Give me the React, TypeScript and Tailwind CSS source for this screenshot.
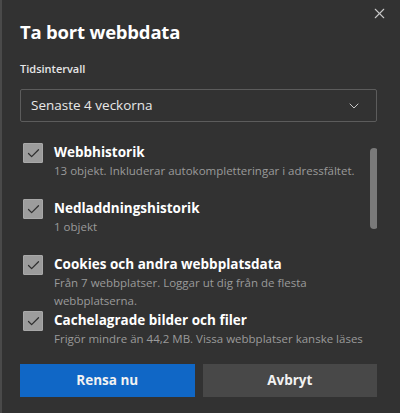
import { X, ChevronDown, Check } from "lucide-react";

const items = [
  { title: "Webbhistorik", desc: "13 objekt. Inkluderar autokompletteringar i adressfältet." },
  { title: "Nedladdningshistorik", desc: "1 objekt" },
  { title: "Cookies och andra webbplatsdata", desc: "Från 7 webbplatser. Loggar ut dig från de flesta webbplatserna." },
  { title: "Cachelagrade bilder och filer", desc: "Frigör mindre än 44,2 MB. Vissa webbplatser kanske läses in långsammare nästa gång du besöker dem." },
];

export default function App() {
  return (
    <div className="w-[400px] h-[413px] bg-[#323232] border-l-2 border-[#4a4a4a] text-white font-['Segoe_UI','Open_Sans',sans-serif] relative overflow-hidden">
      <button className="absolute right-[12px] top-[5px] text-[#c8c8c8]">
        <X size={17} strokeWidth={1.5} />
      </button>

      <div className="pl-[18px] pr-[23px] pt-[19px]">
        {/* Title */}
        <h1 className="text-[18.5px] font-bold leading-[26px] tracking-[-0.2px]">Ta bort webbdata</h1>

        {/* Time range */}
        <div className="mt-[16px] text-[11px] font-semibold leading-[16px] text-[#e6e6e6]">Tidsintervall</div>
        <div className="mt-[12px] h-[33px] border border-[#5c5c5c] rounded-[2px] flex items-center justify-between pl-[10px] pr-[14px]">
          <span className="text-[13.5px] text-[#e8e8e8]">Senaste 4 veckorna</span>
          <ChevronDown size={16} strokeWidth={1.5} className="text-[#c8c8c8]" />
        </div>

        {/* Scrollable list */}
        <div className="mt-[19px] h-[209px] flex overflow-hidden">
          <div className="flex-1 flex flex-col pt-[1px]">
            {items.map((it) => (
              <div key={it.title} className="h-[56px] shrink-0 flex gap-[11px]">
                <div className="mt-[1px] ml-[3px] w-[20px] h-[20px] shrink-0 bg-[#9c9c9c] border border-[#a8a8a8] rounded-[1px] flex items-center justify-center">
                  <Check size={15} strokeWidth={2} className="text-[#2f2f2f]" />
                </div>
                <div className="min-w-0">
                  <div className="text-[13.5px] font-bold leading-[20px]">{it.title}</div>
                  <div className="text-[11.5px] leading-[18px] text-[#9a9a9a]">{it.desc}</div>
                </div>
              </div>
            ))}
          </div>
          <div className="w-[9px] shrink-0 pt-[7px] mr-[-2px]">
            <div className="w-[8px] h-[81px] rounded-full bg-[#7a7a7a]" />
          </div>
        </div>

        {/* Buttons */}
        <div className="mt-[14px] flex gap-[8px]">
          <button className="flex-1 h-[33px] bg-[#1067c6] text-[13.5px] font-bold text-[#f2f2f2]">Rensa nu</button>
          <button className="flex-1 h-[33px] bg-[#484848] text-[13.5px] font-bold text-[#f2f2f2]">Avbryt</button>
        </div>
      </div>
    </div>
  );
}
